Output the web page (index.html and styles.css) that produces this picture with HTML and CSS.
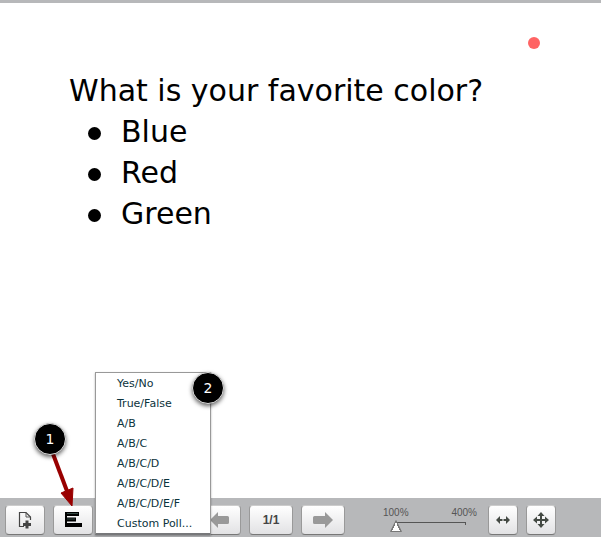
FILE: index.html
```html
<!DOCTYPE html>
<html lang="en">
<head>
  <meta charset="UTF-8">
  <meta name="viewport" content="width=device-width, initial-scale=1.0">
  <title>Presentation</title>
  <link rel="stylesheet" href="styles.css">
</head>
<body>
  <main class="slide">
    <h1>What is your favorite color?</h1>
    <ul class="answers">
      <li>Blue</li>
      <li>Red</li>
      <li>Green</li>
    </ul>
    <span class="pointer"></span>
  </main>

  <footer class="toolbar">
    <button type="button" class="tool" aria-label="Upload presentation">
      <svg width="16" height="18" viewBox="0 0 16 18">
        <path d="M7 15.5H2.5V1.500H9L13.500 6V9" fill="none" stroke="#444" stroke-width="1.200"/>
        <path d="M9 1.500V6H13.500" fill="none" stroke="#555"/>
        <path d="M8.500 9.500h3v2.500H14v3h-2.500v2.500h-3V15H6v-3h2.500z" fill="#444"/>
      </svg>
    </button>

    <div class="poll">
      <button type="button" class="tool" aria-label="Start a poll">
        <svg width="18" height="18" viewBox="0 0 18 18" fill="#000">
          <path d="M1 1h2v15H1zM2 1h13v4H2zM2 6.500h10v4H2zM2 12h16v4H2z"/>
          <path d="M3 2h11v1H3zM3 7.500h8v1H3z" fill="#344a44"/>
        </svg>
      </button>
      <div class="poll-menu">
        <button type="button">Yes/No</button>
        <button type="button">True/False</button>
        <button type="button">A/B</button>
        <button type="button">A/B/C</button>
        <button type="button">A/B/C/D</button>
        <button type="button">A/B/C/D/E</button>
        <button type="button">A/B/C/D/E/F</button>
        <button type="button">Custom Poll...</button>
        <span class="step step-two">2</span>
      </div>
    </div>

    <button type="button" class="tool page-tool previous" aria-label="Previous slide">
      <svg width="20" height="18" viewBox="0 0 20 18">
        <path d="M0 9L8 1V5H17.500Q19 5 19 6.500V11.500Q19 13 17.500 13H8V17Z" fill="#999"/>
      </svg>
    </button>
    <button type="button" class="tool page-tool">1/1</button>
    <button type="button" class="tool page-tool" aria-label="Next slide">
      <svg width="22" height="18" viewBox="0 0 22 18">
        <path d="M21 9L13 1V5H2.500Q1 5 1 6.500V11.500Q1 13 2.500 13H13V17Z" fill="#999"/>
      </svg>
    </button>

    <div class="zoom">
      <label for="zoom">100%</label>
      <span>400%</span>
      <input type="range" id="zoom" min="100" max="400" value="100">
    </div>

    <button type="button" class="tool fit-tool" aria-label="Fit to width">
      <svg width="16" height="16" viewBox="0 0 16 16" fill="#444a44">
        <path d="M1 8L5 4V7H7.500V9H5V12ZM15 8L11 4V7H8.500V9H11V12Z"/>
      </svg>
    </button>
    <button type="button" class="tool fit-tool" aria-label="Fit to page">
      <svg width="16" height="16" viewBox="0 0 16 16" fill="#444a44">
        <path d="M8 0L11.500 4H9V7H12V4.500L16 8L12 11.500V9H9V12H11.500L8 16L4.500 12H7V9H4V11.500L0 8L4 4.500V7H7V4H4.500Z"/>
      </svg>
    </button>

    <svg class="arrow" width="40" height="60" viewBox="0 0 40 60">
      <path d="M13 3L27 40" stroke="#900" stroke-width="4"/>
      <path d="M21 42L33 37L32 55Z" fill="#900" stroke="#900" stroke-width="1"/>
    </svg>
    <span class="step step-one">1</span>
  </footer>
</body>
</html>
```
FILE: styles.css
```css
* {
  box-sizing: border-box;
}

body {
  margin: 0;
  min-height: 100vh;
  display: flex;
  flex-direction: column;
  border-top: 3px solid #b7b8ba;
  background-color: white;
  font-family: "DejaVu Sans", Verdana, sans-serif;
  overflow: hidden;
}

.slide {
  flex: 1;
  position: relative;
  padding: 67px 20px 0 69px;
  font-size: 30px;
  line-height: 41px;
  color: black;
}

h1 {
  margin: 0;
  font-size: inherit;
  font-weight: normal;
}

.answers {
  margin: 0;
  padding: 0 0 0 19px;
  list-style: none;
}

.answers li {
  display: flex;
  align-items: center;
  gap: 20px;
}

.answers li::before {
  content: "";
  width: 13px;
  height: 13px;
  margin-top: 4px;
  border-radius: 50%;
  background-color: black;
}

.pointer {
  position: absolute;
  top: 34px;
  right: 61px;
  width: 12px;
  height: 12px;
  border-radius: 50%;
  background-color: #ff6464;
}

.toolbar {
  position: relative;
  display: flex;
  align-items: center;
  padding: 7px 5px 2px;
  background-color: #b7b8ba;
}

.tool {
  display: flex;
  align-items: center;
  justify-content: center;
  width: 40px;
  height: 30px;
  padding: 0;
  border: 1px solid #999;
  border-top-color: #ccc;
  border-bottom-color: #777;
  border-radius: 4px;
  background: linear-gradient(#fff, #e2e2e4);
  color: #444;
  font: bold 12px "Liberation Sans", Arial, sans-serif;
}

.page-tool {
  width: 44px;
  margin-right: 8px;
}

.previous {
  margin-left: 104px;
  justify-content: flex-start;
  padding-left: 12px;
}

.poll {
  position: relative;
  margin-left: 8px;
}

.poll-menu {
  position: absolute;
  left: 42px;
  bottom: 0;
  z-index: 1;
  width: 116px;
  border: 1px solid #999;
  border-bottom: 2px solid #77787a;
  background-color: white;
  box-shadow: 0 1px 2px rgba(0,0,0,0.3);
}

.poll-menu button {
  display: block;
  width: 100%;
  height: 20px;
  padding: 0 0 0 21px;
  border: none;
  background: none;
  color: #0b333c;
  font: 11px "DejaVu Sans", Verdana, sans-serif;
  text-align: left;
  white-space: nowrap;
}

.zoom {
  display: grid;
  grid-template-columns: 1fr auto;
  width: 94px;
  margin: 0 11px 0 30px;
  color: #555;
  font: 10px/12px "Liberation Sans", Arial, sans-serif;
}

.zoom input {
  grid-column: 1 / 3;
  appearance: none;
  width: 82px;
  height: 14px;
  margin: 0 0 0 7px;
  background:
    linear-gradient(#555, #555) 6px 3px / 70px 1px no-repeat,
    linear-gradient(#555, #555) 75px 3px / 1px 3px no-repeat;
}

.zoom input::-webkit-slider-thumb {
  appearance: none;
  width: 12px;
  height: 12px;
  background:
    conic-gradient(from 157deg at 50% 2px, #fff 46deg, #777 0) 0 0 / 100% 11px no-repeat,
    #777;
  clip-path: polygon(50% 0, 100% 100%, 0 100%);
}

.fit-tool {
  width: 30px;
  margin-right: 8px;
}

.step {
  position: absolute;
  z-index: 2;
  width: 32px;
  height: 32px;
  border: 1px solid #ddd;
  border-radius: 50%;
  background-color: black;
  box-shadow: 0 2px 4px rgba(0,0,0,0.6);
  color: white;
  font-size: 14px;
  line-height: 30px;
  text-align: center;
}

.step-one {
  left: 34px;
  bottom: 82px;
}

.step-two {
  top: -1px;
  right: -14px;
}

.arrow {
  position: absolute;
  left: 40px;
  bottom: 26px;
  z-index: 1;
}
```
